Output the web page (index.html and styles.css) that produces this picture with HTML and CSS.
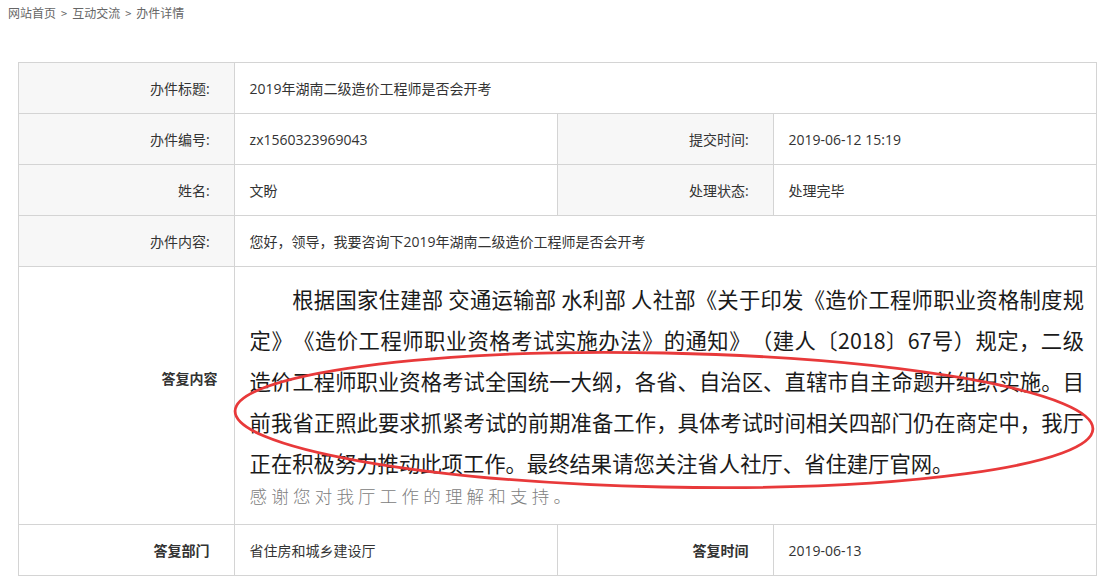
FILE: index.html
```html
<!DOCTYPE html>
<html lang="zh-CN">
<head>
<meta charset="utf-8">
<title>办件详情</title>
<link rel="stylesheet" href="styles.css">
</head>
<body>
<div class="crumb"><a>网站首页</a><span class="sep">&gt;</span><a>互动交流</a><span class="sep">&gt;</span><span>办件详情</span></div>
<div class="wrap">
  <table class="detail">
    <colgroup>
      <col class="c-label"><col class="c-value"><col class="c-label"><col class="c-value">
    </colgroup>
    <tr>
      <th>办件标题:</th>
      <td colspan="3">2019年湖南二级造价工程师是否会开考</td>
    </tr>
    <tr>
      <th>办件编号:</th>
      <td>zx1560323969043</td>
      <th>提交时间:</th>
      <td>2019-06-12 15:19</td>
    </tr>
    <tr>
      <th>姓名:</th>
      <td>文盼</td>
      <th>处理状态:</th>
      <td>处理完毕</td>
    </tr>
    <tr>
      <th>办件内容:</th>
      <td colspan="3">您好，领导，我要咨询下2019年湖南二级造价工程师是否会开考</td>
    </tr>
    <tr class="answer">
      <th class="strong answer-label">答复内容</th>
      <td colspan="3" class="answer-body">
        <p class="reply">根据国家住建部 交通运输部 水利部 人社部《关于印发《造价工程师职业资格制度规定》《造价工程师职业资格考试实施办法》的通知》（建人〔2018〕67号）规定，二级造价工程师职业资格考试全国统一大纲，各省、自治区、直辖市自主命题并组织实施。目前我省正照此要求抓紧考试的前期准备工作，具体考试时间相关四部门仍在商定中，我厅正在积极努力推动此项工作。最终结果请您关注省人社厅、省住建厅官网。</p>
        <p class="thanks">感谢您对我厅工作的理解和支持。</p>
      </td>
    </tr>
    <tr>
      <th class="strong">答复部门</th>
      <td>省住房和城乡建设厅</td>
      <th class="strong">答复时间</th>
      <td>2019-06-13</td>
    </tr>
  </table>
  <svg class="mark" width="1079" height="520" viewBox="0 0 1079 520" aria-hidden="true">
    <ellipse cx="646" cy="358" rx="429" ry="67" transform="rotate(1.2 646 358)" fill="none" stroke="#e8393a" stroke-width="2.8"/>
  </svg>
</div>
</body>
</html>
```
FILE: styles.css
```css
html, body {
  margin: 0;
  padding: 0;
  background: #ffffff;
}

body {
  font-family: "Open Sans", "Noto Sans CJK SC", sans-serif;
  color: #333333;
}

.crumb {
  height: 26px;
  line-height: 26px;
  padding: 0 8px;
  font-size: 12px;
  color: #666666;
  font-family: "Noto Sans CJK SC", sans-serif;
}

.crumb a {
  color: #666666;
  text-decoration: none;
}

.crumb .sep {
  margin: 0 5px;
  font-size: 11px;
}

.wrap {
  position: relative;
  margin: 36px 7px 0 18px;
  width: 1079px;
}

.detail {
  width: 1079px;
  border-collapse: collapse;
  table-layout: fixed;
  font-size: 14px;
}

.c-label { width: 20%; }
.c-value { width: 30%; }

.detail th,
.detail td {
  border: 1px solid #d4d4d4;
  height: 50px;
  box-sizing: border-box;
  vertical-align: middle;
  font-family: "Open Sans", "Noto Sans CJK SC", sans-serif;
}

.detail tr {
  height: 51px;
}

.detail th {
  background: #f7f7f7;
  text-align: right;
  font-weight: normal;
  padding: 0 24px 0 10px;
  color: #333333;
}

.detail td {
  padding: 0 15px;
  color: #333333;
}

.detail th.strong {
  background: #ffffff;
  font-weight: bold;
  color: #333333;
  font-family: "Noto Sans CJK SC", sans-serif;
}

.detail th.answer-label {
  padding: 0 16px 36px 10px;
}

.detail tr.answer {
  height: 258px;
}

.detail td.answer-body {
  padding: 11px 12px 14px 15px;
  vertical-align: top;
}

.reply {
  margin: 0;
  font-size: 21.33px;
  line-height: 41px;
  text-indent: 2em;
  text-align: justify;
  text-spacing-trim: space-all;
  color: #1a1a1a;
  font-family: "Noto Sans CJK SC", sans-serif;
}

.thanks {
  margin: -1px 0 0;
  font-size: 17.5px;
  line-height: 28px;
  letter-spacing: 4.2px;
  color: #808080;
  font-family: "Noto Sans CJK SC", sans-serif;
  font-weight: 300;
}

.mark {
  position: absolute;
  left: 0;
  top: 0;
  overflow: visible;
  pointer-events: none;
}
```
